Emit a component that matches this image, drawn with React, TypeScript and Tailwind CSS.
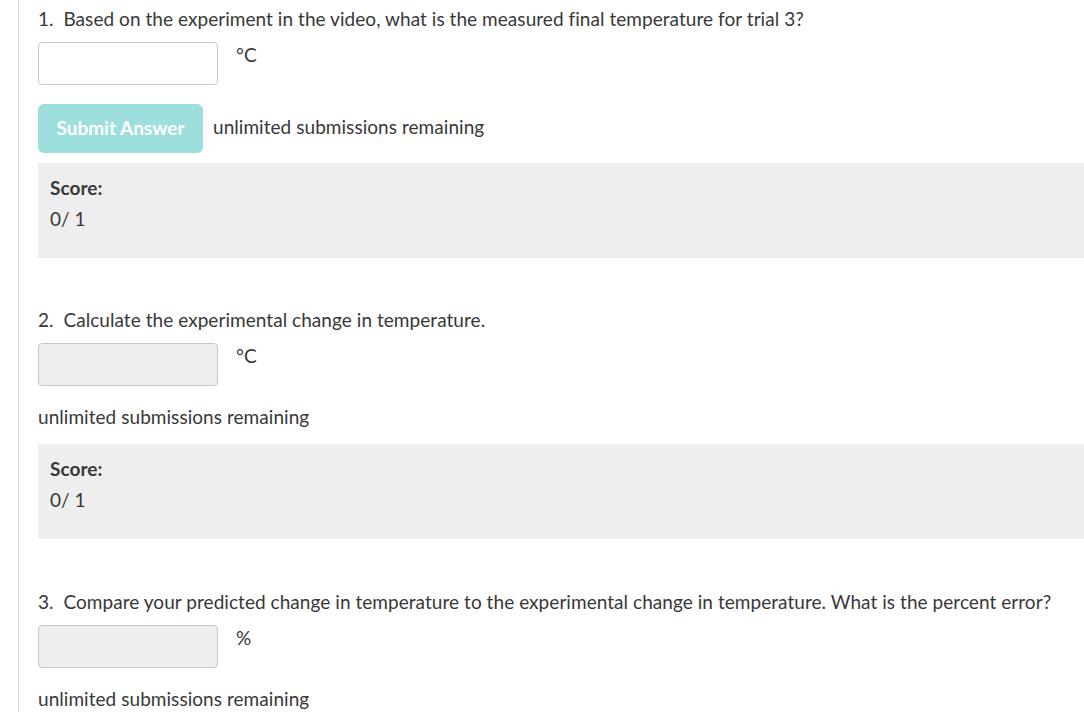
import React from "react";

function ScoreBox() {
  return (
    <div className="h-[95px] bg-[#eeeeee] pl-3 pt-[13px]">
      <div className="leading-6 font-bold">Score:</div>
      <div className="mt-[7px] leading-6">0/ 1</div>
    </div>
  );
}

function InputRow({ unit, disabled }: { unit: string; disabled?: boolean }) {
  return (
    <div className="flex items-start">
      <div
        className={
          "h-[43px] w-[180px] rounded-[4px] border border-[#c8c8c8] " +
          (disabled ? "bg-[#eeeeee]" : "bg-white")
        }
      />
      <div className="ml-[18px] pt-[1px] leading-6">{unit}</div>
    </div>
  );
}

export default function App() {
  return (
    <div
      className="flex h-[712px] w-full overflow-hidden bg-white text-[19px] tracking-[0.05px] text-[#383838] [font-variant-ligatures:none]"
      style={{ fontFamily: "Lato, 'Noto Sans', sans-serif" }}
    >
      <div className="w-[18px] shrink-0" />
      <div className="w-px shrink-0 bg-[#dddddd]" />
      <div className="flex-1 pl-[19px]">
        {/* Question 1 */}
        <div className="pt-[7px] pb-px leading-6">
          1.&nbsp; Based on the experiment in the video, what is the measured final temperature for trial 3?
        </div>
        <div className="mt-[10px]">
          <InputRow unit="°C" />
        </div>
        <div className="mt-[19px] flex items-center">
          <div className="flex h-[49px] w-[165px] items-center justify-center rounded-[6px] bg-[#9cdfdd] pb-px font-bold tracking-normal text-white">
            Submit Answer
          </div>
          <div className="ml-[10px] pb-[3px] leading-6">unlimited submissions remaining</div>
        </div>
        <div className="mt-[10px]">
          <ScoreBox />
        </div>

        {/* Question 2 */}
        <div className="mt-[50px] leading-6">
          2.&nbsp; Calculate the experimental change in temperature.
        </div>
        <div className="mt-[11px]">
          <InputRow unit="°C" disabled />
        </div>
        <div className="mt-[19px] pb-px leading-6">unlimited submissions remaining</div>
        <div className="mt-[14px]">
          <ScoreBox />
        </div>

        {/* Question 3 */}
        <div className="mt-[51px] leading-6">
          3.&nbsp; Compare your predicted change in temperature to the experimental change in temperature. What is the percent error?
        </div>
        <div className="mt-[11px]">
          <InputRow unit="%" disabled />
        </div>
        <div className="mt-[19px] leading-6">unlimited submissions remaining</div>
      </div>
    </div>
  );
}
